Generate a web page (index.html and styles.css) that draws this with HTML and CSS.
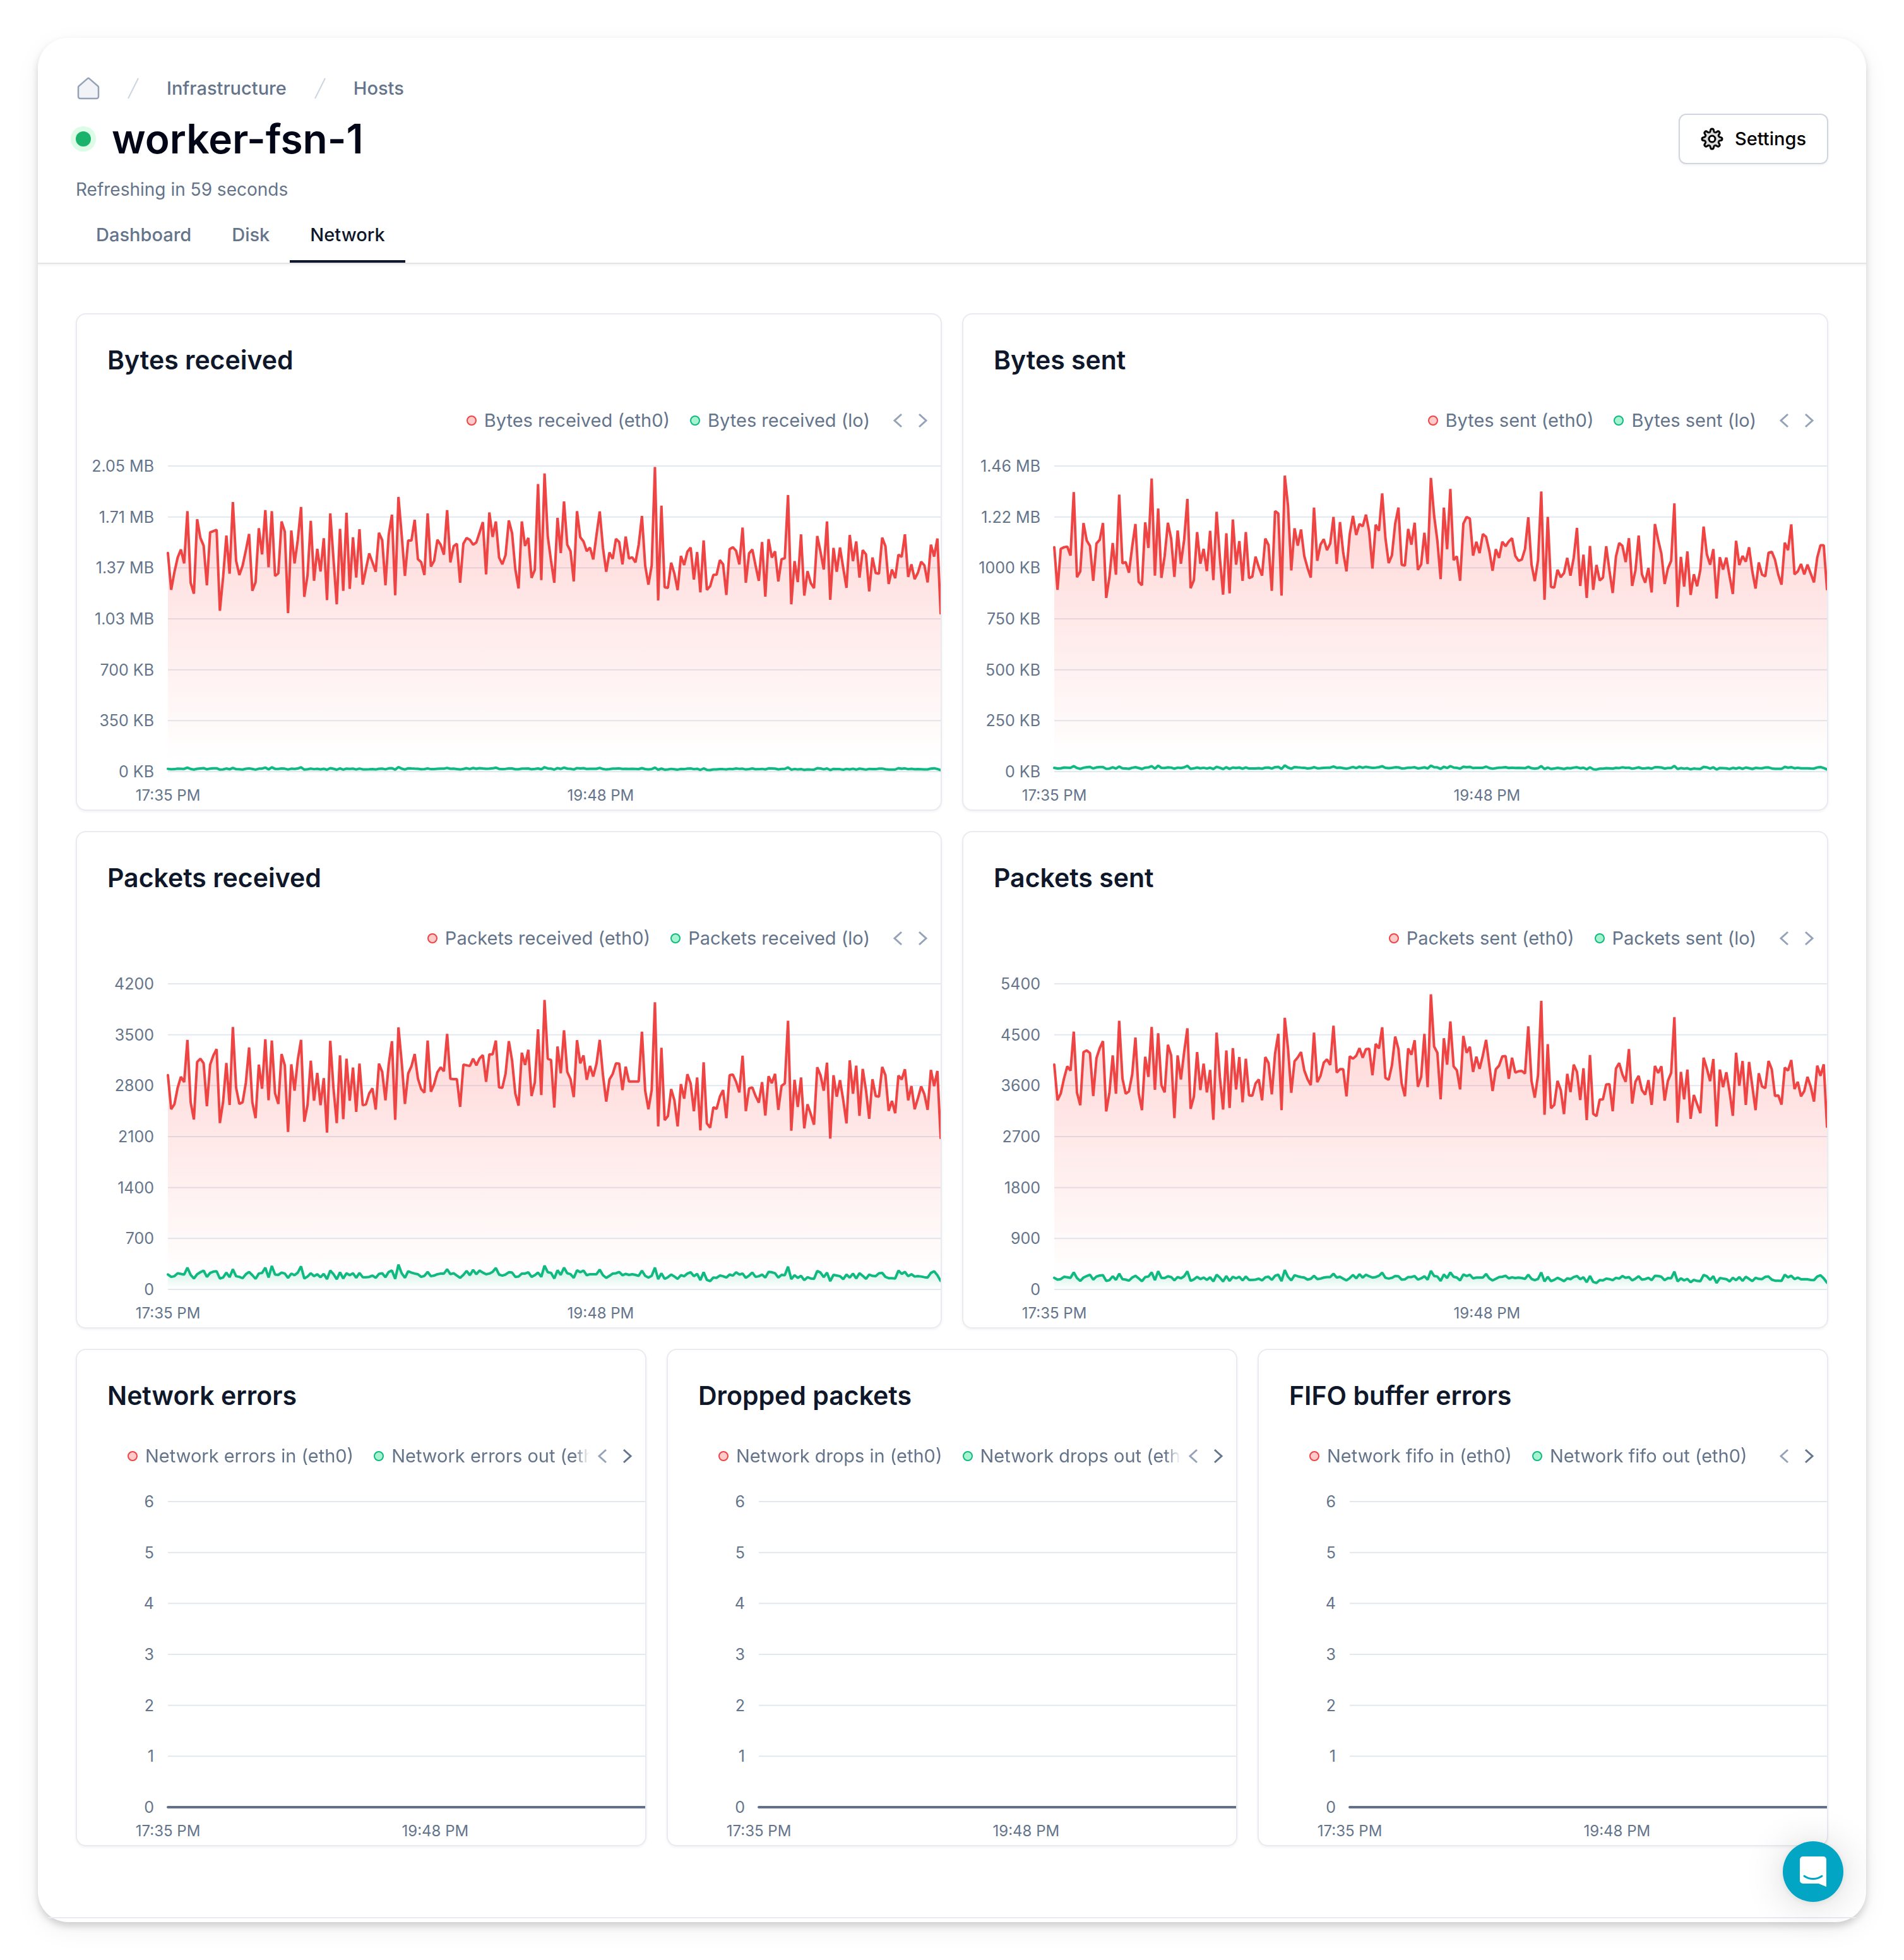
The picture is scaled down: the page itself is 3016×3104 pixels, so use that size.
FILE: index.html
```html
<!DOCTYPE html>
<html lang="en">
<head>
<meta charset="utf-8">
<title>worker-fsn-1 – Network</title>
<link rel="stylesheet" href="styles.css">
</head>
<body>
<svg class="sprite" aria-hidden="true">
  <defs>
    <linearGradient id="fill-red" x1="0" y1="0" x2="0" y2="1">
      <stop offset="0" stop-color="#ff4444" stop-opacity="0.24"/>
      <stop offset="0.96" stop-color="#ff4444" stop-opacity="0"/>
    </linearGradient>
    <linearGradient id="fill-green" x1="0" y1="0" x2="0" y2="1">
      <stop offset="0" stop-color="#10b981" stop-opacity="0.24"/>
      <stop offset="0.96" stop-color="#10b981" stop-opacity="0"/>
    </linearGradient>
    <symbol id="prev" viewBox="0 0 16 24"><path d="M14 2 3 12l11 10" fill="none" stroke="currentColor" stroke-width="3"/></symbol>
    <symbol id="next" viewBox="0 0 16 24"><path d="m2 2 11 10L2 22" fill="none" stroke="currentColor" stroke-width="3"/></symbol>
    <path id="tooth" d="M-4.3-10.4C-3.1-10.9-2.7-11.8-2.6-13.2-2.4-15.4-1.4-16 0-16S2.4-15.4 2.6-13.2C2.7-11.8 3.1-10.9 4.3-10.4"/>
  </defs>
</svg>

<main class="panel">
  <header class="header">
    <nav class="crumbs" aria-label="Breadcrumb">
      <a class="crumb-home" href="#" aria-label="Home">
        <svg width="36" height="36" viewBox="0 0 36 36"><path d="M16.4 2.6a2.4 2.4 0 0 1 3.2 0L33 14.2c.6.5 1 1.300 1 2V31a3 3 0 0 1-3 3H5a3 3 0 0 1-3-3V16.200c0-.7.4-1.500 1-2Z" fill="#f1f3f6" stroke="#94a3b8" stroke-width="2.500"/></svg>
      </a>
      <svg class="slash" width="18" height="34" viewBox="0 0 18 34"><path d="M17 1 1 33" stroke="#cbd5e1" stroke-width="2"/></svg>
      <a href="#">Infrastructure</a>
      <svg class="slash" width="18" height="34" viewBox="0 0 18 34"><path d="M17 1 1 33" stroke="#cbd5e1" stroke-width="2"/></svg>
      <a href="#">Hosts</a>
    </nav>
    <div class="title-row">
      <span class="status"></span>
      <h1>worker-fsn-1</h1>
      <button class="settings" type="button">
        <svg width="36" height="36" viewBox="-18 -18 36 36">
          <g fill="#dedede" stroke="#000" stroke-width="3" stroke-linejoin="round">
            <circle r="11" stroke="none"/>
            <use href="#tooth"/><use href="#tooth" transform="rotate(45)"/><use href="#tooth" transform="rotate(90)"/><use href="#tooth" transform="rotate(135)"/>
            <use href="#tooth" transform="rotate(180)"/><use href="#tooth" transform="rotate(225)"/><use href="#tooth" transform="rotate(270)"/><use href="#tooth" transform="rotate(315)"/>
            <circle r="5" fill="#fff"/>
          </g>
        </svg>
        Settings
      </button>
    </div>
    <p class="refresh">Refreshing in 59 seconds</p>
    <nav class="tabs" aria-label="Host sections">
      <a href="#">Dashboard</a>
      <a href="#">Disk</a>
      <a class="active" href="#" aria-current="page">Network</a>
    </nav>
  </header>

  <div class="cards">
    <section class="card">
      <h2>Bytes received</h2>
      <div class="legend">
        <ul><li class="red">Bytes received (eth0)</li><li class="green">Bytes received (lo)</li></ul>
        <button type="button" aria-label="Previous" disabled><svg><use href="#prev"/></svg></button>
        <button type="button" aria-label="Next" disabled><svg><use href="#next"/></svg></button>
      </div>
      <div class="chart">
        <div class="y-axis"><span>2.05 MB</span><span>1.71 MB</span><span>1.37 MB</span><span>1.03 MB</span><span>700 KB</span><span>350 KB</span><span>0 KB</span></div>
        <svg class="plot" data-chart="bytesReceived"></svg>
        <div class="x-axis"><span>17:35 PM</span><span>19:48 PM</span></div>
      </div>
    </section>

    <section class="card">
      <h2>Bytes sent</h2>
      <div class="legend">
        <ul><li class="red">Bytes sent (eth0)</li><li class="green">Bytes sent (lo)</li></ul>
        <button type="button" aria-label="Previous" disabled><svg><use href="#prev"/></svg></button>
        <button type="button" aria-label="Next" disabled><svg><use href="#next"/></svg></button>
      </div>
      <div class="chart">
        <div class="y-axis"><span>1.46 MB</span><span>1.22 MB</span><span>1000 KB</span><span>750 KB</span><span>500 KB</span><span>250 KB</span><span>0 KB</span></div>
        <svg class="plot" data-chart="bytesSent"></svg>
        <div class="x-axis"><span>17:35 PM</span><span>19:48 PM</span></div>
      </div>
    </section>

    <section class="card">
      <h2>Packets received</h2>
      <div class="legend">
        <ul><li class="red">Packets received (eth0)</li><li class="green">Packets received (lo)</li></ul>
        <button type="button" aria-label="Previous" disabled><svg><use href="#prev"/></svg></button>
        <button type="button" aria-label="Next" disabled><svg><use href="#next"/></svg></button>
      </div>
      <div class="chart">
        <div class="y-axis"><span>4200</span><span>3500</span><span>2800</span><span>2100</span><span>1400</span><span>700</span><span>0</span></div>
        <svg class="plot" data-chart="packetsReceived"></svg>
        <div class="x-axis"><span>17:35 PM</span><span>19:48 PM</span></div>
      </div>
    </section>

    <section class="card">
      <h2>Packets sent</h2>
      <div class="legend">
        <ul><li class="red">Packets sent (eth0)</li><li class="green">Packets sent (lo)</li></ul>
        <button type="button" aria-label="Previous" disabled><svg><use href="#prev"/></svg></button>
        <button type="button" aria-label="Next" disabled><svg><use href="#next"/></svg></button>
      </div>
      <div class="chart">
        <div class="y-axis"><span>5400</span><span>4500</span><span>3600</span><span>2700</span><span>1800</span><span>900</span><span>0</span></div>
        <svg class="plot" data-chart="packetsSent"></svg>
        <div class="x-axis"><span>17:35 PM</span><span>19:48 PM</span></div>
      </div>
    </section>

    <section class="card narrow">
      <h2>Network errors</h2>
      <div class="legend">
        <ul><li class="red">Network errors in (eth0)</li><li class="green">Network errors out (eth0)</li></ul>
        <button type="button" aria-label="Previous" disabled><svg><use href="#prev"/></svg></button>
        <button type="button" aria-label="Next"><svg><use href="#next"/></svg></button>
      </div>
      <div class="chart">
        <div class="y-axis"><span>6</span><span>5</span><span>4</span><span>3</span><span>2</span><span>1</span><span>0</span></div>
        <svg class="plot" data-chart="flat"></svg>
        <div class="x-axis"><span>17:35 PM</span><span>19:48 PM</span></div>
      </div>
    </section>

    <section class="card narrow">
      <h2>Dropped packets</h2>
      <div class="legend">
        <ul><li class="red">Network drops in (eth0)</li><li class="green">Network drops out (eth0)</li></ul>
        <button type="button" aria-label="Previous" disabled><svg><use href="#prev"/></svg></button>
        <button type="button" aria-label="Next"><svg><use href="#next"/></svg></button>
      </div>
      <div class="chart">
        <div class="y-axis"><span>6</span><span>5</span><span>4</span><span>3</span><span>2</span><span>1</span><span>0</span></div>
        <svg class="plot" data-chart="flat"></svg>
        <div class="x-axis"><span>17:35 PM</span><span>19:48 PM</span></div>
      </div>
    </section>

    <section class="card narrow">
      <h2>FIFO buffer errors</h2>
      <div class="legend">
        <ul><li class="red">Network fifo in (eth0)</li><li class="green">Network fifo out (eth0)</li></ul>
        <button type="button" aria-label="Previous" disabled><svg><use href="#prev"/></svg></button>
        <button type="button" aria-label="Next"><svg><use href="#next"/></svg></button>
      </div>
      <div class="chart">
        <div class="y-axis"><span>6</span><span>5</span><span>4</span><span>3</span><span>2</span><span>1</span><span>0</span></div>
        <svg class="plot" data-chart="flat"></svg>
        <div class="x-axis"><span>17:35 PM</span><span>19:48 PM</span></div>
      </div>
    </section>
  </div>
  <div class="panel-foot"></div>
</main>

<button class="chat" type="button" aria-label="Open chat">
  <svg width="42" height="48" viewBox="0 0 42 48"><path d="M5 0h32a5 5 0 0 1 5 5v43l-12-5H5a5 5 0 0 1-5-5V5a5 5 0 0 1 5-5Z" fill="#fff"/><path d="M7 31c8 6 20 6 28 0" fill="none" stroke="#03a5c5" stroke-width="3" stroke-linecap="round"/></svg>
</button>
<script src="charts.js"></script>
</body>
</html>
```
FILE: styles.css
```css
*,
*::before {
  box-sizing: border-box;
}

body {
  margin: 0;
  padding: 60px;
  background: #fff;
  color: #64748b;
  font-family: Inter, "Noto Sans", sans-serif;
  font-size: 29px;
  line-height: 40px;
}

h1,
h2,
p,
ul {
  margin: 0;
  padding: 0;
}

a {
  color: inherit;
  text-decoration: none;
}

button {
  font: inherit;
  cursor: pointer;
}

.sprite {
  position: absolute;
  width: 0;
  height: 0;
}

.panel {
  border-radius: 48px;
  background: #fff;
  box-shadow: 0 6px 12px rgba(0, 0, 0, 0.16), 0 12px 40px rgba(0, 0, 0, 0.06);
}

.header {
  padding: 60px 60px 0;
  border-bottom: 2px solid #e2e4e8;
  border-radius: 48px 48px 0 0;
  background: linear-gradient(#fff, #fff);
}

.crumbs {
  display: flex;
  align-items: center;
  gap: 44px;
  font-weight: 500;
}

.crumb-home {
  display: flex;
  padding-left: 2px;
}

.title-row {
  display: flex;
  align-items: center;
  margin-top: 20px;
}

.status {
  width: 24px;
  height: 24px;
  border-radius: 50%;
  background: #19b36b;
  box-shadow: 0 0 0 8px #dcfce7;
}

h1 {
  margin-left: 33px;
  color: #020617;
  font-size: 64px;
  font-weight: 600;
  line-height: 72px;
}

.settings {
  display: flex;
  align-items: center;
  gap: 18px;
  height: 80px;
  margin-left: auto;
  padding: 0 33px;
  border: 2px solid #d0d5e0;
  border-radius: 12px;
  background: #fff;
  box-shadow: 0 2px 4px rgba(0, 0, 0, 0.05);
  color: #000;
  font-weight: 500;
}

.refresh {
  margin-top: 20px;
  font-size: 28px;
}

.tabs {
  display: flex;
  margin-top: 32px;
  font-weight: 500;
}

.tabs a {
  padding: 0 32px 20px;
  border-bottom: 4px solid transparent;
}

.tabs .active {
  border-color: #0f172a;
  color: #0f172a;
}

.cards {
  display: grid;
  grid-template-columns: repeat(6, 1fr);
  gap: 32px;
  padding: 78px 60px 112px;
  box-shadow: inset 0 4px 4px -2px rgba(0, 0, 0, 0.05);
}

.card {
  grid-column: span 3;
  min-width: 0;
  overflow: hidden;
  padding-bottom: 6px;
  border: 2px solid #e9ebf0;
  border-radius: 16px;
  background: #fff;
  box-shadow: 0 2px 4px rgba(0, 0, 0, 0.05);
}

.card.narrow {
  grid-column: span 2;
}

h2 {
  padding: 48px 48px 52px;
  color: #0f172a;
  font-size: 41px;
  font-weight: 600;
  line-height: 48px;
}

.legend {
  display: flex;
  align-items: center;
  justify-content: flex-end;
  gap: 24px;
  padding-right: 20px;
}

.legend ul {
  display: flex;
  gap: 32px;
  overflow: hidden;
  margin-right: 12px;
  list-style: none;
  white-space: nowrap;
}

.legend li {
  display: flex;
  align-items: center;
  gap: 12px;
}

.legend li::before {
  content: "";
  flex: none;
  width: 16px;
  height: 16px;
  border: 2px solid;
  border-radius: 50%;
}

.legend .red::before {
  border-color: #ef4444;
  background: #fecaca;
}

.legend .green::before {
  border-color: #10b981;
  background: #a7f3d0;
}

.legend button {
  display: flex;
  padding: 0;
  border: 0;
  background: none;
  color: #64748b;
}

.legend button:disabled {
  color: #94a3b8;
}

.legend button svg {
  width: 16px;
  height: 24px;
}

.narrow .legend ul {
  flex: 1;
  margin: 0 -12px 0 80px;
  mask-image: linear-gradient(to left, transparent, #000 24px);
}

.chart {
  display: grid;
  grid-template-columns: 144px 1fr;
  row-gap: 6px;
  margin-top: 36px;
  font-size: 24px;
  line-height: 32px;
}

.y-axis {
  display: flex;
  flex-direction: column;
  justify-content: space-between;
  height: 516px;
  padding-right: 22px;
  font-size: 25px;
  text-align: right;
}

.plot {
  align-self: center;
  width: 100%;
  height: 484px;
  overflow: visible;
}

.plot * {
  vector-effect: non-scaling-stroke;
}

.plot .grid {
  stroke: #e2e8f0;
  stroke-width: 2;
}

.plot polyline {
  fill: none;
  stroke-width: 4;
  stroke-linejoin: bevel;
  stroke-linecap: round;
}

.line-red {
  stroke: #ef4444;
}

.line-green {
  stroke: #10b981;
}

.line-slate {
  stroke: #64708a;
}

.x-axis {
  display: grid;
  grid-column: 2;
  grid-template-columns: 56% 44%;
}

.x-axis span {
  display: flex;
  justify-content: center;
  width: 0;
  white-space: nowrap;
}

.panel-foot {
  height: 8px;
  overflow: hidden;
  border-top: 2px solid #e8ebf0;
  margin: 0 16px;
}

.chat {
  position: fixed;
  right: 96px;
  bottom: 92px;
  display: flex;
  align-items: center;
  justify-content: center;
  width: 96px;
  height: 96px;
  border: 0;
  border-radius: 50%;
  background: #03a5c5;
  box-shadow: 0 2px 12px rgba(0, 0, 0, 0.08), 0 4px 64px rgba(0, 0, 0, 0.16);
}
```
FILE: charts.js
```js
// One sample per step across the plot. Values run downwards: `top` is the
// highest grid line, `base` is zero.
const STEPS = 238;

const loopback = [
  1374,1381,1379,1370,1372,1374,1353,1375,1386,1373,1367,1362,1381,1369,1365,1364,1386,1383,1368,1382,
  1358,1379,1381,1385,1373,1366,1376,1387,1371,1369,1353,1383,1348,1374,1375,1368,1371,1384,1371,1376,
  1368,1349,1386,1380,1370,1379,1373,1382,1372,1388,1362,1373,1388,1367,1386,1370,1376,1370,1384,1369,
  1382,1382,1381,1377,1384,1372,1370,1382,1366,1362,1387,1344,1370,1384,1364,1368,1371,1373,1381,1378,
  1366,1379,1377,1373,1371,1371,1358,1373,1370,1377,1384,1375,1363,1376,1360,1373,1362,1368,1373,1371,
  1366,1354,1374,1377,1374,1367,1368,1381,1380,1371,1371,1367,1381,1376,1368,1381,1347,1367,1369,1386,
  1361,1375,1353,1370,1373,1384,1361,1367,1362,1376,1373,1373,1373,1359,1376,1384,1378,1371,1370,1366,
  1376,1372,1375,1373,1375,1378,1362,1378,1383,1378,1353,1388,1370,1387,1382,1374,1380,1387,1376,1379,
  1371,1367,1379,1372,1391,1367,1390,1394,1383,1384,1377,1379,1383,1374,1377,1367,1374,1371,1384,1377,
  1368,1381,1379,1374,1383,1366,1367,1370,1383,1375,1376,1350,1388,1376,1384,1378,1391,1382,1386,1387,
  1363,1368,1382,1368,1394,1375,1377,1379,1388,1374,1383,1371,1386,1370,1378,1387,1374,1378,1379,1370,
  1369,1381,1385,1385,1386,1362,1372,1366,1379,1373,1380,1379,1380,1382,1383,1369,1364,1376,1393
];

// Zero is at 1419 in the recorded loopback series.
const scaleLoopback = (base, factor) => loopback.map(v => base - (1419 - v) * factor);

const charts = {
  bytesReceived: {
    top: 506, base: 1454, lo: scaleLoopback(1454, 0.19),
    eth: [
      776,890,835,790,765,808,646,868,902,671,729,753,876,712,708,704,955,850,722,840,
      618,800,844,815,768,717,893,866,699,780,643,820,646,847,839,678,710,962,706,808,
      735,633,912,845,676,862,763,833,730,922,653,795,935,701,893,651,887,727,852,702,
      874,825,777,805,834,713,736,876,720,657,907,602,720,847,737,737,673,795,804,844,
      653,818,800,735,750,781,643,805,755,747,868,747,729,735,750,743,712,680,842,650,
      726,678,790,811,782,675,714,826,886,678,754,729,853,828,562,860,529,725,800,868,
      667,776,616,750,770,864,646,727,740,770,759,796,720,647,760,834,774,794,732,742,
      811,725,793,789,805,750,661,815,874,815,509,923,629,882,884,806,840,891,785,813,
      772,759,858,773,898,737,890,879,844,843,798,811,906,764,758,769,811,697,868,777,
      765,815,862,742,911,733,790,771,864,795,792,596,935,801,866,718,908,832,869,885,
      723,772,827,678,921,760,834,759,822,884,720,801,740,852,767,780,895,790,838,840,
      728,755,872,827,854,781,788,718,850,811,857,837,803,814,867,750,787,731,963
    ]
  },
  bytesSent: {
    top: 506, base: 1454, lo: scaleLoopback(1454, 0.26),
    eth: [
      758,890,763,758,756,784,587,851,833,683,737,754,862,746,735,683,915,850,745,843,
      595,808,804,837,756,686,865,876,681,760,545,846,638,853,785,682,731,850,706,809,
      735,608,885,860,711,809,763,832,707,860,648,790,905,715,901,672,812,739,862,711,
      854,849,787,820,846,731,751,893,646,653,908,536,630,830,699,753,703,785,822,852,
      635,800,750,733,767,746,664,810,680,775,833,718,661,720,686,693,657,710,824,688,
      707,591,730,807,783,685,635,812,815,701,750,682,828,811,713,810,543,660,738,857,
      635,764,577,798,786,862,685,664,669,784,741,776,717,726,770,831,764,791,741,755,
      740,730,785,800,796,763,665,812,863,798,585,921,664,881,883,828,851,838,791,846,
      790,698,878,781,915,754,890,813,861,852,755,830,900,787,745,754,804,730,878,830,
      722,842,868,822,898,686,735,778,872,824,800,622,943,788,880,771,906,842,879,828,
      694,780,812,764,917,789,827,790,848,903,738,813,785,803,758,833,886,805,843,848,
      775,772,797,843,874,744,767,687,842,833,810,842,812,840,867,790,752,752,888
    ]
  },
  packetsReceived: {
    top: 493, base: 1419, lo: loopback,
    eth: [
      770,873,858,808,775,791,663,852,904,730,720,734,864,738,710,691,915,850,733,860,
      624,808,857,852,793,686,852,900,738,811,661,846,665,825,857,706,740,942,737,817,
      723,663,911,860,726,847,763,861,779,944,666,810,915,710,903,720,847,747,881,735,
      861,858,825,810,874,735,760,846,738,667,905,625,730,857,765,743,706,780,812,823,
      665,820,797,761,746,758,645,781,782,782,866,738,740,742,720,740,719,709,790,707,
      707,665,807,808,765,667,725,826,862,702,739,693,833,792,631,830,542,720,724,868,
      683,764,634,760,782,836,664,734,710,784,742,774,735,663,770,850,783,766,734,735,
      815,744,789,789,789,789,638,817,873,815,549,925,687,906,894,812,846,925,797,841,
      767,795,879,777,937,731,916,929,867,872,835,815,900,770,768,790,822,711,879,810,
      807,833,853,791,892,773,794,766,875,802,795,605,938,784,866,777,931,858,888,920,
      746,770,817,732,962,770,835,785,845,916,725,826,741,893,751,815,902,782,833,835,
      745,770,878,848,885,771,783,752,846,803,873,840,804,828,875,754,803,757,960
    ]
  },
  packetsSent: {
    top: 493, base: 1419, lo: scaleLoopback(1419, 0.78),
    eth: [
      738,846,825,780,743,756,638,823,861,700,695,703,833,718,688,667,880,822,710,826,
      605,780,826,819,768,656,825,876,714,775,624,814,643,800,822,678,710,900,710,783,
      700,628,872,835,700,815,735,822,754,905,641,775,874,695,869,688,813,715,852,720,
      831,832,795,783,846,715,733,828,705,645,876,596,690,823,728,716,700,755,782,800,
      641,791,772,732,722,739,620,762,752,752,834,713,720,711,688,717,691,690,770,675,
      689,625,778,784,740,653,690,795,834,689,708,664,805,775,645,806,525,683,702,843,
      658,738,607,743,755,813,651,702,684,760,714,751,710,663,740,818,752,741,713,712,
      781,717,762,758,757,765,622,788,838,770,545,890,676,870,860,787,815,888,766,821,
      738,760,845,749,906,709,887,894,844,843,798,797,879,750,733,768,790,691,856,790,
      772,815,829,785,860,742,763,743,847,787,763,594,914,760,843,753,902,830,858,885,
      717,750,788,721,925,753,806,761,820,893,702,802,727,860,730,803,876,764,804,809,
      727,752,833,831,859,747,756,724,812,790,834,818,775,805,850,741,772,737,926
    ]
  },
  flat: { top: 0, base: 600 }
};

function series(values, base, colour) {
  const points = values.map((v, i) => `${i},${v}`).join(' ');
  return `<polygon points="0,${base} ${points} ${STEPS},${base}" fill="url(#fill-${colour})"/>` +
    `<polyline class="line-${colour}" points="${points}"/>`;
}

document.querySelectorAll('.plot').forEach(svg => {
  const { top, base, eth, lo } = charts[svg.dataset.chart];
  const height = base - top;
  svg.setAttribute('viewBox', `0 ${top} ${STEPS} ${height}`);
  svg.setAttribute('preserveAspectRatio', 'none');

  let content = '';
  for (let i = 0; i <= 6; i++) {
    const y = top + height * i / 6;
    content += `<line class="grid" x1="0" x2="${STEPS}" y1="${y}" y2="${y}"/>`;
  }
  content += eth
    ? series(eth, base, 'red') + series(lo, base, 'green')
    : `<polyline class="line-slate" points="0,${base} ${STEPS},${base}"/>`;
  svg.innerHTML = content;
});
```
